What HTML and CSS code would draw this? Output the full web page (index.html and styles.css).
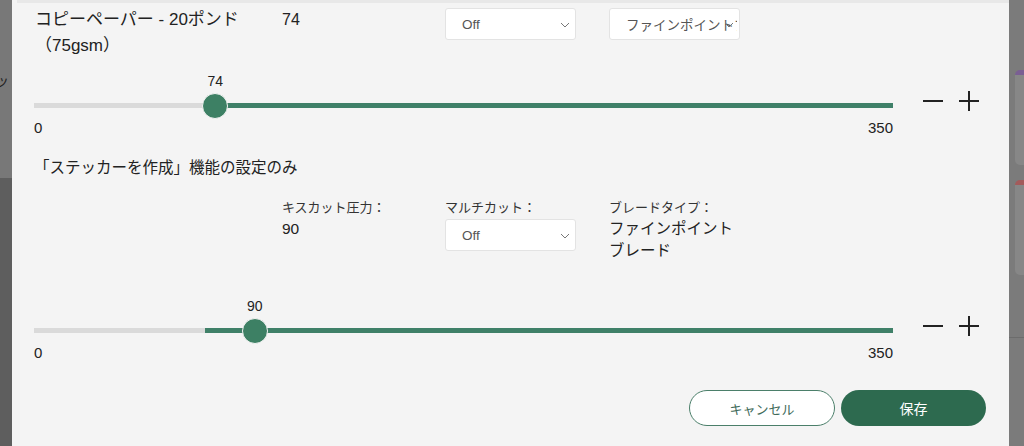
FILE: index.html
```html
<!DOCTYPE html>
<html lang="ja">
<head>
    <title>カット設定</title>
    <meta charset="utf-8">
    <link rel="stylesheet" href="styles.css">
</head>
<body>
    <div class="screen">
        <div class="backdrop-left">
            <span class="peek">ッ</span>
        </div>

        <div class="modal">
            <div class="top-edge"></div>

            <div class="settings-row first">
                <div class="material">コピーペーパー - 20ポンド（75gsm）</div>
                <div class="value">74</div>
                <div class="field">
                    <div class="select">
                        <span class="select-text">Off</span>
                        <svg class="chevron" width="10" height="6" viewBox="0 0 10 6"><path d="M1 1l4 4 4-4" fill="none" stroke="#777" stroke-width="1"/></svg>
                    </div>
                </div>
                <div class="field">
                    <div class="select">
                        <span class="select-text">ファインポイントブレード</span>
                        <svg class="chevron" width="10" height="6" viewBox="0 0 10 6"><path d="M1 1l4 4 4-4" fill="none" stroke="#777" stroke-width="1"/></svg>
                    </div>
                </div>
            </div>

            <div class="slider-row">
                <div class="slider">
                    <div class="slider-value"><span style="left: 21.1%">74</span></div>
                    <div class="track">
                        <div class="fill" style="left: 21.1%"></div>
                        <div class="thumb" style="left: 21.1%"></div>
                    </div>
                    <div class="range-labels"><span>0</span><span>350</span></div>
                </div>
                <div class="steppers">
                    <button class="step" aria-label="減らす">
                        <svg width="20" height="20" viewBox="0 0 20 20"><path d="M0 10h20" stroke="#222" stroke-width="2"/></svg>
                    </button>
                    <button class="step" aria-label="増やす">
                        <svg width="20" height="20" viewBox="0 0 20 20"><path d="M0 10h20M10 0v20" stroke="#222" stroke-width="2"/></svg>
                    </button>
                </div>
            </div>

            <h3 class="section-title">「ステッカーを作成」機能の設定のみ</h3>

            <div class="settings-row sticker">
                <div></div>
                <div class="field">
                    <div class="field-label">キスカット圧力：</div>
                    <div class="field-value">90</div>
                </div>
                <div class="field">
                    <div class="field-label">マルチカット：</div>
                    <div class="select">
                        <span class="select-text">Off</span>
                        <svg class="chevron" width="10" height="6" viewBox="0 0 10 6"><path d="M1 1l4 4 4-4" fill="none" stroke="#777" stroke-width="1"/></svg>
                    </div>
                </div>
                <div class="field">
                    <div class="field-label">ブレードタイプ：</div>
                    <div class="field-value blade">ファインポイントブレード</div>
                </div>
            </div>

            <div class="slider-row second">
                <div class="slider">
                    <div class="slider-value"><span style="left: 25.7%">90</span></div>
                    <div class="track">
                        <div class="fill" style="left: 19.9%"></div>
                        <div class="thumb" style="left: 25.7%"></div>
                    </div>
                    <div class="range-labels"><span>0</span><span>350</span></div>
                </div>
                <div class="steppers">
                    <button class="step" aria-label="減らす">
                        <svg width="20" height="20" viewBox="0 0 20 20"><path d="M0 10h20" stroke="#222" stroke-width="2"/></svg>
                    </button>
                    <button class="step" aria-label="増やす">
                        <svg width="20" height="20" viewBox="0 0 20 20"><path d="M0 10h20M10 0v20" stroke="#222" stroke-width="2"/></svg>
                    </button>
                </div>
            </div>

            <div class="actions">
                <button class="btn cancel">キャンセル</button>
                <button class="btn save">保存</button>
            </div>
        </div>

        <div class="backdrop-right">
            <div class="peek-card purple"></div>
            <div class="peek-card red"></div>
            <div class="peek-line"></div>
        </div>
    </div>
</body>
</html>
```

FILE: styles.css
```css
/* Cut settings modal */
html, body {
    margin: 0;
    height: 100%;
    overflow: hidden;
}
body {
    font-family: "Liberation Sans", "Noto Sans CJK JP", sans-serif;
    color: #222;
    background: #7b7b7b;
}
.screen {
    display: flex;
    height: 446px;
}
.backdrop-left {
    width: 12px;
    flex: none;
    background: linear-gradient(#787878 0, #787878 178px, #5e5e5e 178px);
    overflow: hidden;
}
.peek {
    display: block;
    margin: 70px 0 0 -5px;
    font-size: 14px;
    color: #222;
}
.modal {
    width: 997px;
    flex: none;
    background: #f4f4f4;
    padding: 0 23px 0 22px;
    box-sizing: border-box;
}
.top-edge {
    height: 3px;
    margin: 0 -23px 0 -17px;
    background: #e8e8e8;
}
.settings-row {
    display: grid;
    grid-template-columns: 247px 163px 164px 131px;
    padding-left: 1px;
}
.settings-row.first {
    margin-top: 4px;
}
.settings-row.sticker {
    margin-top: 19px;
}
.material {
    font-size: 17px;
    line-height: 26px;
    padding-right: 20px;
}
.value {
    font-size: 16px;
    line-height: 26px;
}
.field-label {
    font-size: 13px;
    line-height: 20px;
    color: #333;
}
.field-value {
    font-size: 15.5px;
    line-height: 22px;
}
.field-value.blade {
    width: 128px;
}
.select {
    position: relative;
    width: 131px;
    height: 32px;
    box-sizing: border-box;
    margin-top: 1px;
    background: #fff;
    border: 1px solid #e3e3e3;
    border-radius: 3px;
    padding-left: 16px;
    display: flex;
    align-items: center;
    font-size: 13.5px;
    color: #555;
}
.select-text {
    flex: none;
    white-space: nowrap;
    overflow: hidden;
    width: 111px;
}
.chevron {
    position: absolute;
    right: 5px;
    top: 13px;
}
.slider-row {
    display: flex;
    align-items: flex-start;
    margin-top: 11px;
}
.slider-row.second {
    margin-top: 33px;
}
.slider {
    width: 859px;
}
.slider-value {
    position: relative;
    height: 22px;
    font-size: 14px;
    line-height: 22px;
}
.slider-value span {
    position: absolute;
    transform: translateX(-50%);
}
.track {
    position: relative;
    height: 5px;
    margin-top: 11px;
    background: #dadada;
}
.fill {
    position: absolute;
    top: 0;
    right: 0;
    bottom: 0;
    background: #3f8068;
}
.thumb {
    position: absolute;
    top: 50%;
    width: 26px;
    height: 26px;
    box-sizing: border-box;
    border-radius: 50%;
    background: #3d8064;
    border: 1.5px solid #f4f4f4;
    transform: translate(-50%, -50%);
}
.range-labels {
    display: flex;
    justify-content: space-between;
    margin-top: 10px;
    font-size: 15px;
    line-height: 20px;
}
.steppers {
    display: flex;
    gap: 16px;
    margin: 21px 0 0 30px;
}
.step {
    width: 20px;
    height: 20px;
    padding: 0;
    border: none;
    background: none;
    display: block;
}
.step svg {
    display: block;
}
.section-title {
    margin: 19px 0 0;
    font-size: 15.5px;
    font-weight: normal;
    line-height: 22px;
}
.actions {
    display: flex;
    justify-content: flex-end;
    gap: 6px;
    margin-top: 27px;
}
.btn {
    width: 146px;
    height: 36px;
    border-radius: 18px;
    font-family: "Noto Sans CJK JP", sans-serif;
    font-size: 13px;
    cursor: pointer;
}
.btn.cancel {
    background: #fff;
    border: 1px solid #4b7f6a;
    color: #3f6b5a;
}
.btn.save {
    width: 145px;
    background: #2d6a4f;
    border: none;
    color: #fff;
    font-size: 14px;
}
.backdrop-right {
    flex: 1;
    background: #7b7b7b;
    padding-top: 70px;
    overflow: hidden;
}
.peek-card {
    margin-left: 6px;
    width: 30px;
    height: 90px;
    background: #878787;
    border-radius: 5px 0 0 5px;
    border-top: 5px solid #7a5f93;
}
.peek-card.red {
    margin-top: 15px;
    border-top-color: #a35b5b;
}
.peek-line {
    margin-top: 62px;
    height: 1px;
    background: #6c6c6c;
}
```
